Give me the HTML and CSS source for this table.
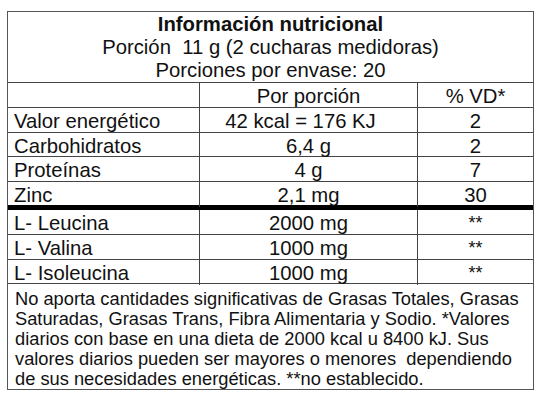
FILE: index.html
```html
<!DOCTYPE html>
<html lang="es">
<head>
<meta charset="utf-8">
<title>Información nutricional</title>
<link rel="stylesheet" href="styles.css">
</head>
<body>
<div class="label">
  <div class="head">
    <div class="title">Información nutricional</div>
    <div class="line">Porción&nbsp; 11 g (2 cucharas medidoras)</div>
    <div class="line">Porciones por envase: 20</div>
  </div>
  <div class="row">
    <div class="c1"></div>
    <div class="c2">Por porción</div>
    <div class="c3">% VD*</div>
  </div>
  <div class="row">
    <div class="c1">Valor energético</div>
    <div class="c2 kcal">42 kcal = 176 KJ</div>
    <div class="c3">2</div>
  </div>
  <div class="row">
    <div class="c1">Carbohidratos</div>
    <div class="c2">6,4 g</div>
    <div class="c3">2</div>
  </div>
  <div class="row">
    <div class="c1">Proteínas</div>
    <div class="c2">4 g</div>
    <div class="c3">7</div>
  </div>
  <div class="row thick">
    <div class="c1">Zinc</div>
    <div class="c2">2,1 mg</div>
    <div class="c3">30</div>
  </div>
  <div class="row">
    <div class="c1">L- Leucina</div>
    <div class="c2">2000 mg</div>
    <div class="c3 ast">**</div>
  </div>
  <div class="row">
    <div class="c1">L- Valina</div>
    <div class="c2">1000 mg</div>
    <div class="c3 ast">**</div>
  </div>
  <div class="row">
    <div class="c1">L- Isoleucina</div>
    <div class="c2">1000 mg</div>
    <div class="c3 ast">**</div>
  </div>
  <div class="foot">No aporta cantidades significativas de Grasas Totales, Grasas<br>Saturadas, Grasas Trans, Fibra Alimentaria y Sodio. *Valores<br>diarios con base en una dieta de 2000 kcal u 8400 kJ. Sus<br>valores diarios pueden ser mayores o menores&nbsp; dependiendo<br>de sus necesidades energéticas. **no establecido.</div>
</div>
</body>
</html>
```

FILE: styles.css
```css
html, body {
  margin: 0;
  padding: 0;
  background: #ffffff;
}

body {
  font-family: "Liberation Sans", Arial, sans-serif;
  color: #111111;
}

.label {
  margin: 11px 0 0 7px;
  width: 527px;
  box-sizing: border-box;
  border: 1px solid #555555;
}

.head {
  box-sizing: border-box;
  height: 71px;
  padding-top: 1px;
  border-bottom: 1px solid #444444;
  text-align: center;
  font-size: 20.3px;
  line-height: 23px;
}

.title {
  font-weight: bold;
}

.row {
  display: grid;
  grid-template-columns: 191px 218px 116px;
  box-sizing: border-box;
  height: 24.75px;
  border-bottom: 1px solid #444444;
  font-size: 20.3px;
  line-height: 24px;
}

.row.thick {
  height: 28px;
  border-bottom: 5px solid #000000;
}

.c1 {
  padding-left: 6px;
  padding-top: 1px;
  white-space: nowrap;
}

.c2,
.c3 {
  box-sizing: border-box;
  border-left: 1px solid #444444;
  text-align: center;
  padding-top: 1px;
  white-space: nowrap;
}

.kcal {
  padding-right: 16px;
}

.ast {
  font-size: 18px;
}

.foot {
  box-sizing: border-box;
  height: 105px;
  padding: 5px 0 0 7px;
  font-size: 18.3px;
  line-height: 20px;
  white-space: nowrap;
}
```
